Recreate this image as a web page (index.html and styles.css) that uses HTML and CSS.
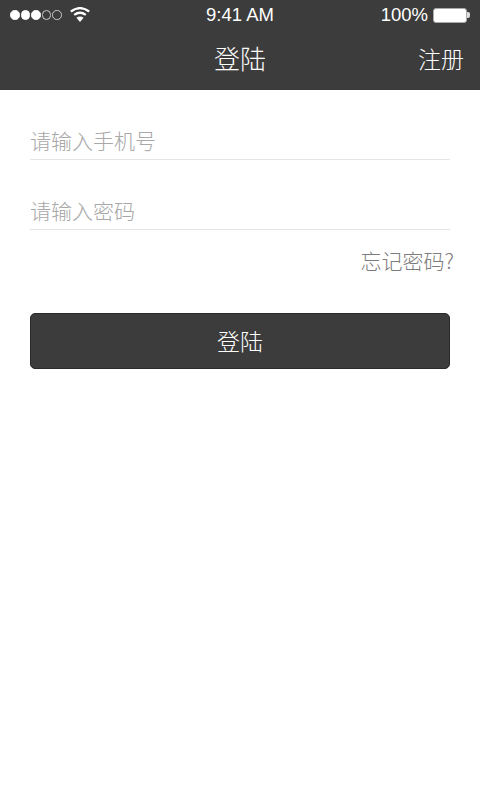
FILE: index.html
```html
<!DOCTYPE html>
<html lang="zh-CN">

<head>
    <meta charset="UTF-8">
    <meta name="viewport" content="width=device-width, initial-scale=1.0">
    <title>登陆</title>
    <link rel="stylesheet" href="styles.css">
</head>

<body>
    <header class="header">
        <div class="statusBar">
            <div class="statusLeft">
                <span class="signal">
                    <i class="dot"></i>
                    <i class="dot"></i>
                    <i class="dot"></i>
                    <i class="dot empty"></i>
                    <i class="dot empty"></i>
                </span>
                <svg class="wifi" width="20" height="15" viewBox="0 0 20 15">
                    <path d="M10 15 L6.4 10.8 Q10 8.2 13.6 10.8 Z" fill="#fff"/>
                    <path d="M4.2 7.9 Q10 3.6 15.8 7.9" fill="none" stroke="#fff" stroke-width="2.2"/>
                    <path d="M0.8 4.5 Q10 -2.4 19.2 4.5" fill="none" stroke="#fff" stroke-width="2.2"/>
                </svg>
            </div>
            <div class="statusTime">9:41 AM</div>
            <div class="statusRight">
                <span>100%</span>
                <span class="battery"></span>
                <i class="batteryTip"></i>
            </div>
        </div>
        <nav class="navBar">
            <h1 class="navTitle">登陆</h1>
            <a class="navRegister">注册</a>
        </nav>
    </header>

    <form class="loginForm">
        <input class="field" type="text" placeholder="请输入手机号">
        <input class="field" type="password" placeholder="请输入密码">
        <div class="forgot">忘记密码?</div>
        <button class="loginBtn" type="button">登陆</button>
    </form>
</body>

</html>
```

FILE: styles.css
```css
* {
    padding: 0;
    margin: 0;
    box-sizing: border-box;
}

body {
    width: 480px;
    height: 800px;
    background-color: #fff;
    font-family: "Liberation Sans", "Noto Sans CJK SC", sans-serif;
    overflow: hidden;
}

.header {
    height: 90px;
    color: #fff;
    background-color: #3C3C3C;
}

.statusBar {
    display: grid;
    grid-template-columns: 1fr auto 1fr;
    align-items: center;
    height: 30px;
    padding: 0 10px;
    font-size: 18.5px;
}

.statusLeft {
    display: flex;
    align-items: center;
    gap: 8px;
}

.signal {
    display: flex;
    gap: 1px;
}

.dot {
    width: 9.5px;
    height: 9.5px;
    border: 1px solid #fff;
    border-radius: 50%;
    background-color: #fff;
}

.dot.empty {
    border-color: #ccc;
    background-color: transparent;
}

.wifi {
    margin-bottom: 2px;
}

.statusRight {
    display: flex;
    align-items: center;
    justify-content: flex-end;
}

.battery {
    width: 34px;
    height: 15px;
    margin-left: 5px;
    border: 1px solid #aaa;
    border-radius: 3px;
    background-color: #fff;
}

.batteryTip {
    width: 3px;
    height: 6px;
    border-radius: 0 2px 2px 0;
    background-color: #ddd;
}

.navBar {
    position: relative;
    display: flex;
    align-items: center;
    justify-content: center;
    height: 60px;
    padding-bottom: 5px;
}

.navTitle {
    font-size: 26px;
    font-weight: 300;
}

.navRegister {
    position: absolute;
    right: 16px;
    top: 11px;
    font-size: 23px;
    font-weight: 300;
}

.loginForm {
    display: flex;
    flex-direction: column;
    padding: 36px 30px 0;
}

.field {
    display: block;
    width: 100%;
    height: 34px;
    padding-bottom: 2px;
    border: none;
    border-bottom: 1px solid #e5e5e5;
    outline: none;
    color: #333;
    font-family: inherit;
    font-size: 21px;
    font-weight: 300;
}

.field + .field {
    margin-top: 36px;
}

.field::placeholder {
    color: #a8a8a8;
}

.forgot {
    margin: 15px -4px 0 0;
    color: #7c7c7c;
    font-family: "Noto Sans CJK SC", sans-serif;
    font-size: 21px;
    font-weight: 300;
    line-height: 30px;
    text-align: right;
}

.loginBtn {
    height: 56px;
    margin-top: 38px;
    padding-bottom: 3px;
    border: 1px solid #2a2a2a;
    border-radius: 5px;
    color: #fff;
    background-color: #3C3C3C;
    font-family: inherit;
    font-size: 23px;
    font-weight: 300;
}
```
